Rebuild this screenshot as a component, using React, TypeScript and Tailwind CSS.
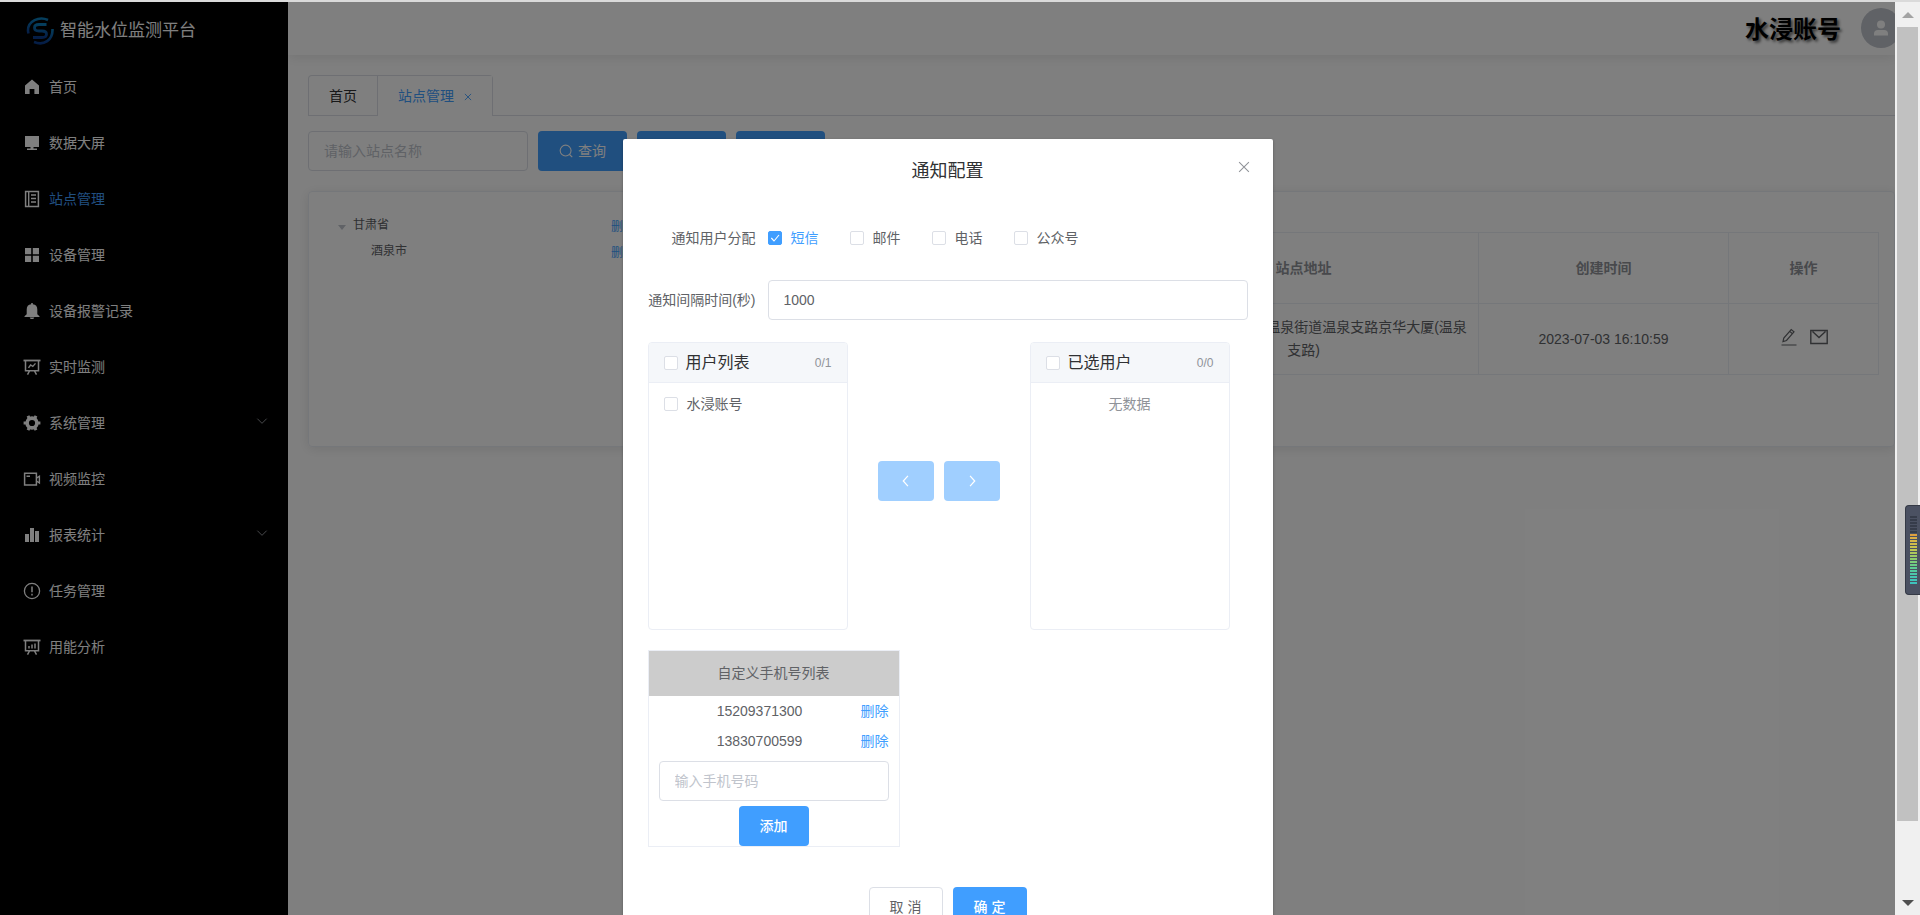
import { useState } from "react";
import type { ReactNode } from "react";

type IconProps = { children: ReactNode; className?: string };

function Icon({ children, className = "size-[18px]" }: IconProps) {
  return (
    <svg
      viewBox="0 0 18 18"
      className={className}
      fill="none"
      stroke="currentColor"
      strokeWidth="1.2"
      aria-hidden="true"
    >
      {children}
    </svg>
  );
}

const board = (
  <>
    <path d="M.5 2.5h17" strokeWidth="1.8" />
    <path d="M2.5 2.5v10.3h13V2.5M6.5 13l-2 3.6M11.5 13l2 3.6" strokeWidth="1.5" />
  </>
);

const icons: Record<string, ReactNode> = {
  home: <path d="M9 1.5 16 7.5V16h-4.6v-5H6.6v5H2V7.500z" fill="currentColor" stroke="none" />,
  screen: (
    <path d="M2 2h14v11h-5.5v1.600H14V16H4v-1.400h3.5V13H2z" fill="currentColor" stroke="none" />
  ),
  notebook: (
    <>
      <path d="M2.600 1.600h12.800v15H2.600z" strokeWidth="1.500" />
      <path d="M5.700 1.600v15M8 5h5M8 8.500h5M8 12h5" strokeWidth="1.400" />
    </>
  ),
  grid: (
    <path
      d="M2 2h6.2v6.2H2zM9.8 2H16v6.2H9.8zM2 9.8h6.2V16H2zM9.8 9.8H16V16H9.8z"
      fill="currentColor"
      stroke="none"
    />
  ),
  bell: (
    <path
      d="M8.2 1h1.6v1.2A5.2 5.2 0 0 1 14.3 7.4v4.8l2.2 2v.8h-15v-.8l2.2-2V7.4a5.2 5.2 0 0 1 4.5-5.2zM6.8 15.5h4.4c0 2-4.4 2-4.4 0z"
      fill="currentColor"
      stroke="none"
    />
  ),
  trend: (
    <>
      {board}
      <path d="M5.5 9.8 7.6 7l2.2 1.4 2.7-3" strokeWidth="1.4" />
    </>
  ),
  gear: (
    <>
      <circle cx="9" cy="9" r="4.9" strokeWidth="3.6" />
      <path
        d="M6 3.8 5 1.8M12 3.8l1-2M15 9h2.4M.6 9H3M6 14.2l-1 2M12 14.2l1 2"
        strokeWidth="3"
      />
    </>
  ),
  video: (
    <>
      <path d="M1.6 3.2h11.800v11.800H1.600z" strokeWidth="1.500" />
      <path d="M3.5 6.2H7M13.4 8.200l3-2v6.800l-3-2" strokeWidth="1.400" />
    </>
  ),
  bars: (
    <path d="M2 8h4v8H2zM7 2h4v14H7zM12 5h4v11h-4z" fill="currentColor" stroke="none" />
  ),
  warning: (
    <>
      <circle cx="9" cy="9" r="7.6" strokeWidth="1.3" />
      <path d="M9 4.500v5.800M9 11.800v1.600" strokeWidth="1.500" />
    </>
  ),
  analysis: (
    <>
      {board}
      <path d="M6 10.500V8M9 10.500V6.500M12 10.500V5.500" strokeWidth="1.500" />
    </>
  ),
};

const menu = [
  { icon: "home", label: "首页" },
  { icon: "screen", label: "数据大屏" },
  { icon: "notebook", label: "站点管理", active: true },
  { icon: "grid", label: "设备管理" },
  { icon: "bell", label: "设备报警记录" },
  { icon: "trend", label: "实时监测" },
  { icon: "gear", label: "系统管理", children: true },
  { icon: "video", label: "视频监控" },
  { icon: "bars", label: "报表统计", children: true },
  { icon: "warning", label: "任务管理" },
  { icon: "analysis", label: "用能分析" },
];

function Logo() {
  return (
    <svg viewBox="0 0 28 28" className="size-7" fill="none" aria-hidden="true">
      <defs>
        <linearGradient id="logo" x1="0" y1="0" x2="0" y2="1">
          <stop offset="0" stopColor="#0a7cba" />
          <stop offset="1" stopColor="#0b3a8c" />
        </linearGradient>
      </defs>
      <g stroke="url(#logo)">
        <path d="M22 3C13-1 2 4 2 13.500c0 1 .2 2 .5 3" strokeWidth="2.600" />
        <path
          d="M20.500 7.500H13c-6 0-6 6.500 0 6.500h3c6 0 6 6.500 0 6.500H7"
          strokeWidth="2.800"
        />
        <path d="M26.500 12C27 23 18 29 8 25" strokeWidth="2.600" />
      </g>
    </svg>
  );
}

function Sidebar() {
  return (
    <aside className="w-[288px] shrink-0 bg-black text-white">
      <div className="flex h-[57px] items-center gap-[6px] pl-[26px] text-[17px]">
        <Logo />
        <h1>智能水位监测平台</h1>
      </div>
      <nav>
        {menu.map((item) => (
          <a
            key={item.label}
            href="#"
            className="flex h-14 items-center pr-5 pl-[23px] text-sm"
          >
            <Icon>{icons[item.icon]}</Icon>
            <span className={item.active ? "ml-2 text-[#409eff]" : "ml-2"}>{item.label}</span>
            {item.children && (
              <Icon className="mb-1 ml-auto size-3 text-[#909399]">
                <path d="M2 5.500 9 12.500l7-7" strokeWidth="1.500" />
              </Icon>
            )}
          </a>
        ))}
      </nav>
    </aside>
  );
}

function Header() {
  return (
    <header className="flex h-[53px] shrink-0 items-center justify-end overflow-hidden bg-white shadow-[0_2px_12px_rgba(0,0,0,0.1)]">
      <span className="mt-[2px] mr-5 text-2xl font-bold text-black [text-shadow:2px_2px_3px_#666]">
        水浸账号
      </span>
      <button
        aria-label="用户"
        className="-mr-[6px] mb-[2px] grid size-10 shrink-0 place-items-center rounded-full bg-[#c0c4cc] text-white"
      >
        <svg viewBox="0 0 16 16" className="size-4" fill="currentColor" aria-hidden="true">
          <circle cx="8" cy="4.500" r="4" />
          <path d="M1 15.500v-1.500a4 4 0 0 1 4-4h6a4 4 0 0 1 4 4v1.500z" />
        </svg>
      </button>
    </header>
  );
}

function Tabs() {
  return (
    <div className="flex border-b border-[#dcdfe6]">
      <div className="-mb-px flex h-[41px] rounded-t border border-b-0 border-[#dcdfe6] text-sm">
        <button className="border-b border-[#dcdfe6] px-5 text-[#303133]">首页</button>
        <button className="flex items-center gap-[10px] border-l border-[#dcdfe6] bg-white px-5 text-[#409eff]">
          站点管理
          <Icon className="mt-px size-2">
            <path d="m2 2 14 14M16 2 2 16" strokeWidth="2" />
          </Icon>
        </button>
      </div>
    </div>
  );
}

function SearchIcon() {
  return (
    <Icon className="size-[14px]">
      <circle cx="8.500" cy="8.500" r="7" strokeWidth="1.400" />
      <path d="m13.500 13.500 3.500 3.500" strokeWidth="1.400" />
    </Icon>
  );
}

function Toolbar() {
  return (
    <div className="mt-[15px] flex gap-[10px] text-sm">
      <input
        aria-label="站点名称"
        placeholder="请输入站点名称"
        className="h-10 w-[220px] rounded border border-[#dcdfe6] px-[15px] placeholder:text-[#c0c4cc]"
      />
      {["查询", "重置", "新增"].map((label) => (
        <button
          key={label}
          className="flex h-10 w-[89px] items-center justify-center gap-[5px] rounded bg-[#409eff] text-white"
        >
          <SearchIcon />
          {label}
        </button>
      ))}
    </div>
  );
}

function StationTree() {
  return (
    <ul className="w-[342px] shrink-0 pt-5 pr-4 pl-[28px] text-xs text-[#606266]">
      <li className="flex h-[26px] items-center">
        <span className="mt-1 mr-[7px] ml-px border-x-4 border-t-[5px] border-x-transparent border-t-[#c0c4cc]" />
        甘肃省
        <a href="#" className="mt-1 ml-auto text-[#409eff]">
          删除
        </a>
      </li>
      <li className="flex h-[26px] items-center pl-[34px]">
        酒泉市
        <a href="#" className="mt-1 ml-auto text-[#409eff]">
          删除
        </a>
      </li>
    </ul>
  );
}

function StationTable() {
  const cell = "border border-[#ebeef5] px-[10px]";

  return (
    <div className="flex-1 pt-10 pr-[15px]">
      <table className="w-full table-fixed border-collapse text-center text-sm leading-[23px] text-[#606266]">
        <colgroup>
          <col />
          <col className="w-[350px]" />
          <col className="w-[250px]" />
          <col className="w-[150px]" />
        </colgroup>
        <thead>
          <tr className="h-[71px] text-[#909399]">
            <th className={cell}>站点名称</th>
            <th className={cell}>站点地址</th>
            <th className={cell}>创建时间</th>
            <th className={cell}>操作</th>
          </tr>
        </thead>
        <tbody>
          <tr className="h-[71px]">
            <td className={cell}>酒泉</td>
            <td className={cell}>甘肃省酒泉市肃州区温泉街道温泉支路京华大厦(温泉支路)</td>
            <td className={cell}>2023-07-03 16:10:59</td>
            <td className={cell}>
              <div className="flex justify-center gap-3 pb-1">
                <button aria-label="编辑">
                  <Icon>
                    <path d="M1.500 17h15M3 13.600l.8-3.600 7.400-8.500 2.800 2.400-7.500 8.600zM9.800 3.400l2.600 2.300" />
                  </Icon>
                </button>
                <button aria-label="通知">
                  <Icon>
                    <path d="M.8 2.500h16.400v13H.8zM2.500 3.500 9 9.500l6.500-6" strokeWidth="1.400" />
                  </Icon>
                </button>
              </div>
            </td>
          </tr>
        </tbody>
      </table>
    </div>
  );
}

type CheckProps = {
  label: string;
  checked?: boolean;
  onChange?: () => void;
  textClass?: string;
};

function Check({ label, checked = false, onChange = () => {}, textClass = "ml-[9px]" }: CheckProps) {
  return (
    <label className={checked ? "flex items-center text-[#409eff]" : "flex items-center"}>
      <span className="grid size-[14px] place-items-center">
        <input
          type="checkbox"
          checked={checked}
          onChange={onChange}
          className="col-start-1 row-start-1 size-[14px] appearance-none rounded-[2px] border border-[#dcdfe6] bg-white checked:border-[#409eff] checked:bg-[#409eff]"
        />
        {checked && (
          <Icon className="pointer-events-none col-start-1 row-start-1 size-3 text-white">
            <path d="m3.500 9 4 4.500 7.500-9" strokeWidth="1.700" />
          </Icon>
        )}
      </span>
      <span className={textClass}>{label}</span>
    </label>
  );
}

type PanelProps = { title: string; count: string; children: ReactNode };

function TransferPanel({ title, count, children }: PanelProps) {
  return (
    <section className="h-72 w-[200px] overflow-hidden rounded border border-[#ebeef5]">
      <div className="flex h-10 items-center justify-between border-b border-[#ebeef5] bg-[#f5f7fa] px-[15px]">
        <Check label={title} textClass="ml-2 text-base text-[#303133]" />
        <span className="text-xs text-[#909399]">{count}</span>
      </div>
      <div className="px-[15px] pt-[11px]">{children}</div>
    </section>
  );
}

function PhoneList() {
  const phones = ["15209371300", "13830700599"];

  return (
    <section className="mt-5 w-[252px] border border-[#ebeef5]">
      <h3 className="bg-[#ccc] text-center leading-[45px]">自定义手机号列表</h3>
      <ul className="px-[10px]">
        {phones.map((phone) => (
          <li key={phone} className="flex h-[30px] items-center">
            <span className="flex-1 text-center">{phone}</span>
            <button className="text-[#409eff]">删除</button>
          </li>
        ))}
      </ul>
      <div className="flex flex-col items-center gap-[5px] px-[10px] pt-[5px]">
        <input
          aria-label="手机号码"
          placeholder="输入手机号码"
          className="h-10 w-full rounded border border-[#dcdfe6] px-[15px] placeholder:text-[#c0c4cc]"
        />
        <button className="h-10 rounded bg-[#409eff] px-[21px] font-medium text-white">添加</button>
      </div>
    </section>
  );
}

function NotifyDialog() {
  const [channels, setChannels] = useState(["短信"]);

  const toggle = (name: string) =>
    setChannels((prev) =>
      prev.includes(name) ? prev.filter((c) => c !== name) : [...prev, name]
    );

  return (
    <div
      role="dialog"
      aria-labelledby="dialog-title"
      className="mt-[137px] w-[650px] shrink-0 rounded-[2px] bg-white px-[25px] pb-5 text-sm text-[#606266] shadow-[0_1px_3px_rgba(0,0,0,0.3)]"
    >
      <div className="grid grid-cols-[1fr_auto_1fr] items-center pt-5">
        <h2 id="dialog-title" className="col-start-2 text-lg leading-6 text-[#303133]">
          通知配置
        </h2>
        <button aria-label="关闭" className="mr-[-4px] mb-2 justify-self-end text-[#909399]">
          <Icon className="size-4">
            <path d="m3.500 3.500 11 11M14.500 3.500l-11 11" />
          </Icon>
        </button>
      </div>

      <div className="mt-[35px] flex h-10 items-center">
        <span className="w-[120px] pr-3 text-right">通知用户分配</span>
        <div className="flex gap-[31px]">
          {["短信", "邮件", "电话", "公众号"].map((name) => (
            <Check
              key={name}
              label={name}
              checked={channels.includes(name)}
              onChange={() => toggle(name)}
            />
          ))}
        </div>
      </div>

      <div className="mt-[22px] flex items-center">
        <label htmlFor="interval" className="w-[120px] shrink-0 pr-3 text-right whitespace-nowrap">
          通知间隔时间(秒)
        </label>
        <input
          id="interval"
          defaultValue="1000"
          className="h-10 min-w-0 flex-1 rounded border border-[#dcdfe6] px-[15px]"
        />
      </div>

      <div className="mt-[22px] flex items-center gap-[30px]">
        <TransferPanel title="用户列表" count="0/1">
          <Check label="水浸账号" />
        </TransferPanel>
        <div className="flex gap-[10px] pb-[10px]">
          <button
            disabled
            aria-label="移到左侧"
            className="grid h-10 w-14 place-items-center rounded bg-[#a0cfff] text-white"
          >
            <Icon className="size-[14px]">
              <path d="m11.500 2.500-6 6.500 6 6.500" strokeWidth="1.600" />
            </Icon>
          </button>
          <button
            disabled
            aria-label="移到右侧"
            className="grid h-10 w-14 place-items-center rounded bg-[#a0cfff] text-white"
          >
            <Icon className="size-[14px]">
              <path d="m6.500 2.500 6 6.500-6 6.500" strokeWidth="1.600" />
            </Icon>
          </button>
        </div>
        <TransferPanel title="已选用户" count="0/0">
          <p className="text-center text-[#909399]">无数据</p>
        </TransferPanel>
      </div>

      <PhoneList />

      <div className="mt-10 flex justify-center gap-[10px]">
        <button className="h-10 w-[74px] rounded border border-[#dcdfe6] bg-white">取 消</button>
        <button className="h-10 w-[74px] rounded bg-[#409eff] font-medium text-white">确 定</button>
      </div>
    </div>
  );
}

const levels = [
  "bg-[#363c4a]", "bg-[#363c4a]", "bg-[#363c4a]", "bg-[#363c4a]", "bg-[#363c4a]", "bg-[#363c4a]",
  "bg-[#e0a040]", "bg-[#dcae45]", "bg-[#d6b648]", "bg-[#d0bc4a]", "bg-[#c8c24e]", "bg-[#bcc654]",
  "bg-[#acc85c]", "bg-[#9cca64]", "bg-[#8ccb6e]", "bg-[#7ccb7a]", "bg-[#6ccb86]", "bg-[#5ecb94]",
  "bg-[#54caa0]", "bg-[#4cc8aa]", "bg-[#46c6b2]", "bg-[#42c4b8]", "bg-[#3ec2bc]",
];

function ScrollRail() {
  return (
    <div className="relative flex w-[25px] shrink-0 flex-col items-center bg-[#f0f0f0]">
      <div className="mt-[10px] mb-[9px] border-x-[6px] border-b-[6px] border-x-transparent border-b-[#a3a3a3]" />
      <div className="w-[21px] flex-1 bg-[#c1c1c1]" />
      <div className="mt-[79px] mb-[9px] border-x-[6px] border-t-[6px] border-x-transparent border-t-[#505050]" />
      <div className="absolute top-[503px] right-0 flex h-[90px] w-[15px] flex-col items-center gap-px rounded-l-[4px] border border-r-0 border-[#353a46] bg-[#4b5162] pt-[10px]">
        {levels.map((color, i) => (
          <span key={i} className={`h-[2px] w-[7px] shrink-0 ${color}`} />
        ))}
      </div>
    </div>
  );
}

export default function App() {
  return (
    <div className="flex h-screen flex-col overflow-hidden bg-white font-['Liberation_Sans','Noto_Sans_CJK_SC',sans-serif]">
      <div className="h-[2px] shrink-0 bg-[#dadada]" />
      <div className="flex min-h-0 flex-1">
        <div className="relative flex min-w-0 flex-1 overflow-hidden">
          <Sidebar />
          <div className="flex min-w-0 flex-1 flex-col">
            <Header />
            <main className="pt-5 pl-5">
              <Tabs />
              <Toolbar />
              <div className="mt-5 flex h-64 rounded border border-[#ebeef5] shadow-[0_2px_12px_rgba(0,0,0,0.1)]">
                <StationTree />
                <StationTable />
              </div>
            </main>
          </div>
          <div className="absolute inset-0 flex items-start justify-center bg-black/50">
            <NotifyDialog />
          </div>
        </div>
        <ScrollRail />
      </div>
    </div>
  );
}
